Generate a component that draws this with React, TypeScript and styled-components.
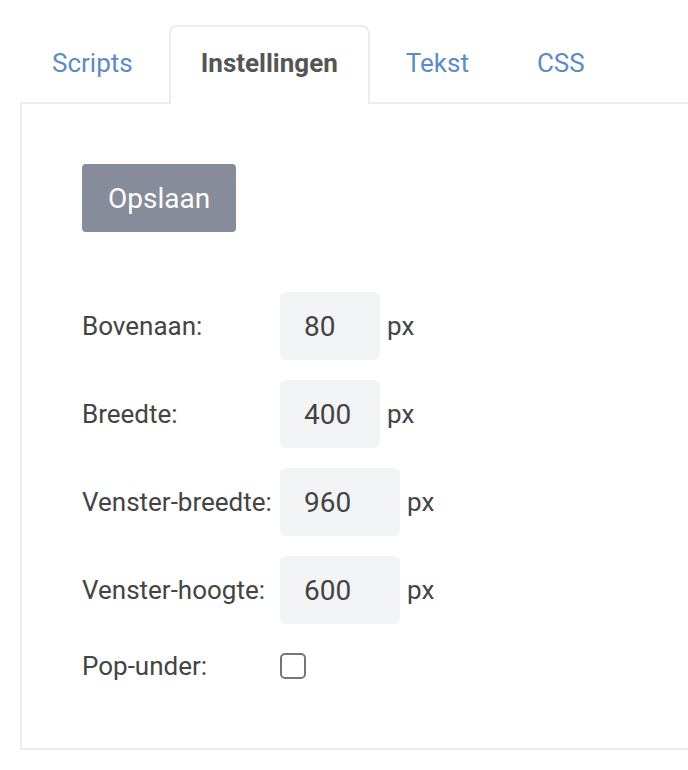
import React from 'react'
import styled, { createGlobalStyle } from 'styled-components'

const GlobalStyle = createGlobalStyle`
  html, body {
    margin: 0;
    padding: 0;
    background: #fff;
  }
  body {
    font-family: Roboto, 'Noto Sans', 'Liberation Sans', sans-serif;
  }
`

const Page = styled.div`
  padding: 25px 0 0 20px;
`

const TabBar = styled.div`
  display: flex;
  gap: 4px;
  position: relative;
  z-index: 1;
`

const Tab = styled.div<{ $active?: boolean }>`
  box-sizing: border-box;
  height: 79px;
  padding: 0 30px 6px;
  display: flex;
  align-items: center;
  font-size: 26px;
  font-weight: ${(p) => (p.$active ? 700 : 400)};
  color: ${(p) => (p.$active ? '#555555' : '#5c8bc7')};
  border: 2px solid ${(p) => (p.$active ? '#ececec' : 'transparent')};
  border-bottom: none;
  border-radius: 8px 8px 0 0;
  background: ${(p) => (p.$active ? '#fff' : 'transparent')};
  margin-bottom: -2px;
  cursor: pointer;
`

// No right border: the panel runs off the right edge of the window.
const Panel = styled.div`
  border: 2px solid #ececec;
  border-right: none;
  padding: 60px;
`

const SaveButton = styled.button`
  height: 68px;
  padding: 0 26px;
  border: none;
  border-radius: 4px;
  background: #868c99;
  color: #fff;
  font-family: inherit;
  font-size: 28px;
  cursor: pointer;
`

const Form = styled.div`
  margin-top: 60px;
  display: flex;
  flex-direction: column;
  gap: 20px;
`

const Row = styled.div<{ $height?: number }>`
  display: flex;
  align-items: center;
  height: ${(p) => p.$height ?? 68}px;
`

const Label = styled.label`
  width: 198px;
  flex: none;
  font-size: 26px;
  color: #444;
`

const NumberInput = styled.input<{ $width: number }>`
  box-sizing: border-box;
  width: ${(p) => p.$width}px;
  height: 68px;
  padding: 0 0 0 24px;
  border: none;
  border-radius: 6px;
  background: #f3f4f6;
  font-family: inherit;
  font-size: 28px;
  color: #444;
  outline: none;
`

const Unit = styled.span`
  margin-left: 7px;
  font-size: 26px;
  color: #444;
`

const Checkbox = styled.input`
  appearance: none;
  box-sizing: border-box;
  margin: 0;
  width: 26px;
  height: 26px;
  border: 2px solid #767676;
  border-radius: 5px;
  background: #fff;
`

const tabs = ['Scripts', 'Instellingen', 'Tekst', 'CSS']

const fields = [
  { label: 'Bovenaan:', value: '80', width: 100 },
  { label: 'Breedte:', value: '400', width: 100 },
  { label: 'Venster-breedte:', value: '960', width: 120 },
  { label: 'Venster-hoogte:', value: '600', width: 120 },
]

export default function App() {
  return (
    <>
      <GlobalStyle />
      <Page>
        <TabBar>
          {tabs.map((t) => (
            <Tab key={t} $active={t === 'Instellingen'}>
              {t}
            </Tab>
          ))}
        </TabBar>
        <Panel>
          <SaveButton>Opslaan</SaveButton>
          <Form>
            {fields.map((f) => (
              <Row key={f.label}>
                <Label>{f.label}</Label>
                <NumberInput $width={f.width} defaultValue={f.value} />
                <Unit>px</Unit>
              </Row>
            ))}
            <Row $height={44}>
              <Label>Pop-under:</Label>
              <Checkbox type='checkbox' />
            </Row>
          </Form>
        </Panel>
      </Page>
    </>
  )
}
